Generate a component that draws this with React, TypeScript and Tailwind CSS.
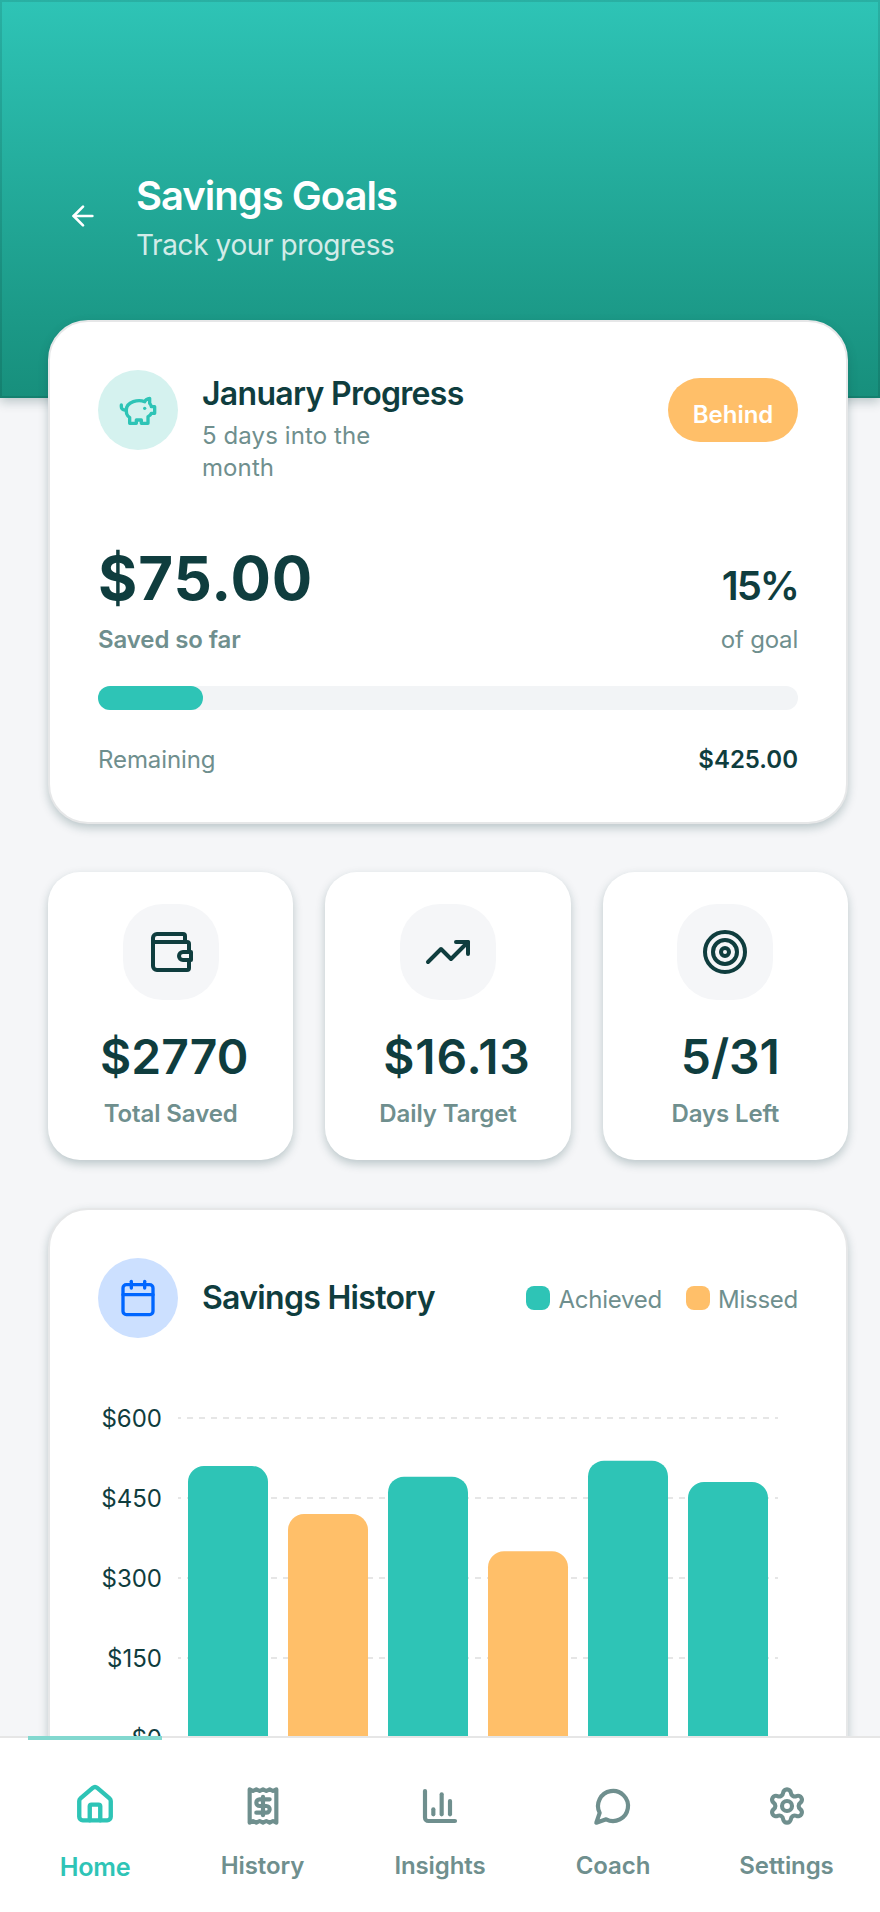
import type { ReactNode } from "react";
import {
  ArrowLeft,
  Calendar,
  ChartColumn,
  House,
  Settings,
  Target,
  TrendingUp,
} from "lucide-react";

const history = [
  { amount: 510, achieved: true },
  { amount: 420, achieved: false },
  { amount: 490, achieved: true },
  { amount: 350, achieved: false },
  { amount: 520, achieved: true },
  { amount: 480, achieved: true },
];

const ticks = [600, 450, 300, 150, 0];

function PiggyIcon() {
  return (
    <svg width="40" height="40" viewBox="0 0 24 24" fill="none" stroke="#2EC4B6" strokeWidth="2" strokeLinecap="round" strokeLinejoin="round">
      <path d="M19 5c-1.5 0-2.8 1.4-3 2-3.5-1.5-11-.3-11 5 0 1.8 0 3 2 4.5V20h4v-2h3v2h4v-4c1-.5 1.7-1 2-2h2v-4h-2c0-1-.5-1.5-1-2V5z" />
      <path d="M2 9v1c0 1.1.9 2 2 2h1" />
      <path d="M16 11h.01" />
    </svg>
  );
}

function WalletIcon() {
  return (
    <svg width="48" height="48" viewBox="0 0 24 24" fill="none" stroke="currentColor" strokeWidth="2" strokeLinecap="round" strokeLinejoin="round">
      <path d="M19 7V4a1 1 0 0 0-1-1H5a2 2 0 0 0-2 2v14a2 2 0 0 0 2 2h15a1 1 0 0 0 1-1v-4" />
      <path d="M3 7h17a1 1 0 0 1 1 1v4" />
      <path d="M18 12h4v4h-4a2 2 0 0 1 0-4" />
    </svg>
  );
}

function ReceiptIcon() {
  return (
    <svg width="40" height="40" viewBox="0 0 24 24" fill="none" stroke="currentColor" strokeWidth="2.5" strokeLinecap="round" strokeLinejoin="round">
      <path d="M4 2v20l2-1 2 1 2-1 2 1 2-1 2 1 2-1 2 1V2l-2 1-2-1-2 1-2-1-2 1-2-1-2 1Z" />
      <path d="M16 8h-6a2 2 0 1 0 0 4h4a2 2 0 1 1 0 4H8" />
      <path d="M12 17.5v-11" />
    </svg>
  );
}

function ChatIcon() {
  return (
    <svg width="40" height="40" viewBox="0 0 24 24" fill="none" stroke="currentColor" strokeWidth="2.5" strokeLinecap="round" strokeLinejoin="round">
      <path d="M7.9 20A9 9 0 1 0 4 16.1L2 22Z" />
    </svg>
  );
}

function StatCard({ icon, value, label, shift }: { icon: ReactNode; value: string; label: string; shift: string }) {
  return (
    <div className="flex h-[288px] flex-1 flex-col items-center rounded-[32px] bg-white pt-8 shadow-[0_4px_10px_rgba(15,61,62,0.25)]">
      <div className="flex size-24 items-center justify-center rounded-[40px] bg-[#f5f6f8]">{icon}</div>
      <p className={`mt-[27px] text-[48px] leading-[60px] font-semibold ${shift}`}>{value}</p>
      <p className="mt-[11px] text-[24px] leading-8 font-semibold tracking-[-0.1px] text-[#6f8f8e]">{label}</p>
    </div>
  );
}

function NavItem({ icon, label, className }: { icon: ReactNode; label: string; className: string }) {
  return (
    <div className={`flex w-[134px] flex-col items-center pt-[50px] text-[#6f8f8e] ${className}`}>
      {icon}
      <span className="mt-6 text-[24px] leading-8 font-semibold tracking-[-0.1px]">{label}</span>
    </div>
  );
}

export default function App() {
  return (
    <div className="flex h-[1912px] w-[880px] flex-col overflow-hidden bg-[#f5f6f8] font-['Inter',sans-serif] text-[#0f3d3e]">
      {/* Header */}
      <header className="h-[398px] shrink-0 bg-linear-to-b from-[#2ec4b6] to-[#178f7c] pt-[172px] shadow-[inset_0_0_0_2px_rgba(0,0,0,0.1),0_4px_10px_rgba(15,61,62,0.25)]">
        <div className="flex items-start pl-[67px] text-white">
          <ArrowLeft size={32} className="mt-7" />
          <div className="ml-[37px]">
            <h1 className="text-[40px] leading-12 font-semibold tracking-[-1px]">Savings Goals</h1>
            <p className="mt-[5px] text-[28px] leading-10 tracking-[-0.4px] opacity-80">Track your progress</p>
          </div>
        </div>
      </header>

      <main className="-mt-[78px] flex min-h-0 flex-1 flex-col px-8 pl-12">
        {/* Monthly progress */}
        <section className="h-[504px] w-[800px] shrink-0 rounded-[40px] border-2 border-[#e6e7e8] bg-white p-12 shadow-[0_4px_10px_rgba(15,61,62,0.25)]">
          <div className="flex">
            <div className="flex size-20 items-center justify-center rounded-full bg-[#d5f2ef]">
              <PiggyIcon />
            </div>
            <div className="ml-6 h-[112px] flex-1 pt-1">
              <h2 className="text-[32px] leading-10 font-semibold tracking-[-0.7px]">January Progress</h2>
              <p className="mt-[6px] w-[200px] text-[24px] leading-8 tracking-[0.1px] text-[#6f8f8e]">5 days into the month</p>
            </div>
            <div className="mt-2 flex h-16 w-[130px] items-center justify-center rounded-[32px] bg-[#ffbf69] pt-[10px] text-[24px] font-semibold text-white">
              Behind
            </div>
          </div>
          <div className="mt-[58px] flex items-end justify-between">
            <div>
              <p className="text-[60px] leading-[76px] font-bold tracking-[0.9px]">$75.00</p>
              <p className="mt-2 text-[24px] leading-8 font-semibold tracking-[-0.1px] text-[#6f8f8e]">Saved so far</p>
            </div>
            <div className="text-right">
              <p className="text-[40px] leading-12 font-semibold tracking-[-2px]">15%</p>
              <p className="mt-[14px] text-[24px] leading-8 tracking-[-0.2px] text-[#6f8f8e]">of goal</p>
            </div>
          </div>
          <div className="mt-[30px] h-6 rounded-full bg-[#f2f4f6]">
            <div className="h-6 w-[15%] rounded-full bg-[#2ec4b6]" />
          </div>
          <div className="mt-[34px] flex justify-between text-[24px] leading-8">
            <span className="tracking-[-0.1px] text-[#6f8f8e]">Remaining</span>
            <span className="font-semibold">$425.00</span>
          </div>
        </section>

        {/* Stats */}
        <section className="mt-12 flex w-[800px] gap-8">
          <StatCard icon={<WalletIcon />} value="$2770" label="Total Saved" shift="pl-[7px]" />
          <StatCard icon={<TrendingUp size={48} />} value="$16.13" label="Daily Target" shift="pl-[18px] tracking-[0.8px]" />
          <StatCard icon={<Target size={48} />} value="5/31" label="Days Left" shift="pl-[10px]" />
        </section>

        {/* Savings history */}
        <section className="mt-12 h-[700px] w-[800px] shrink-0 rounded-[40px] border-2 border-[#e6e7e8] bg-white p-12 shadow-[0_4px_10px_rgba(15,61,62,0.25)]">
          <div className="flex items-center">
            <div className="flex size-20 items-center justify-center rounded-full bg-[#cce0ff] text-[#0066ff]">
              <Calendar size={40} />
            </div>
            <h2 className="ml-6 flex-1 text-[32px] leading-10 font-semibold tracking-[-0.7px]">Savings History</h2>
            <div className="flex items-center text-[24px] leading-8 tracking-[-0.25px] text-[#6f8f8e]">
              <span className="size-6 rounded-lg bg-[#2ec4b6]" />
              <span className="mt-[3px] ml-2">Achieved</span>
              <span className="ml-6 size-6 rounded-lg bg-[#ffbf69]" />
              <span className="mt-[3px] ml-2">Missed</span>
            </div>
          </div>
          <div className="mt-16 flex">
            <div className="flex w-16 flex-col gap-12 pt-px text-right text-[24px] leading-8">
              {ticks.map((tick) => (
                <span key={tick}>${tick}</span>
              ))}
            </div>
            <svg className="mt-[15px] ml-4" width="600" height="322" viewBox="0 -1 600 322">
              {ticks.map((tick, i) => (
                <line key={tick} x1="0" x2="600" y1={i * 80} y2={i * 80} stroke="#e6e6e6" strokeWidth="2" strokeDasharray="6 6" strokeDashoffset="3" />
              ))}
              {history.map((month, i) => (
                <rect
                  key={i}
                  x={10 + i * 100}
                  y={320 - (month.amount / 600) * 320}
                  width="80"
                  height="340"
                  rx="16"
                  fill={month.achieved ? "#2EC4B6" : "#FFBF69"}
                />
              ))}
            </svg>
          </div>
        </section>
      </main>

      {/* Bottom navigation */}
      <nav className="relative flex h-[176px] shrink-0 bg-white shadow-[inset_0_2px_0_#e6e6e6]">
        <div className="ml-7 w-[134px] border-t-4 border-[#82d8cf] pt-[46px] text-[#2ec4b6]">
          <div className="flex scale-105 flex-col items-center">
            <House size={40} strokeWidth={2.5} />
            <span className="mt-6 text-[24px] leading-8 font-semibold tracking-[-0.3px]">Home</span>
          </div>
        </div>
        <NavItem icon={<ReceiptIcon />} label="History" className="ml-[33.5px]" />
        <NavItem icon={<ChartColumn size={40} strokeWidth={2.5} />} label="Insights" className="ml-[43.5px]" />
        <NavItem icon={<ChatIcon />} label="Coach" className="ml-[39px]" />
        <NavItem icon={<Settings size={40} strokeWidth={2.5} />} label="Settings" className="ml-[39.5px]" />
      </nav>
    </div>
  );
}
